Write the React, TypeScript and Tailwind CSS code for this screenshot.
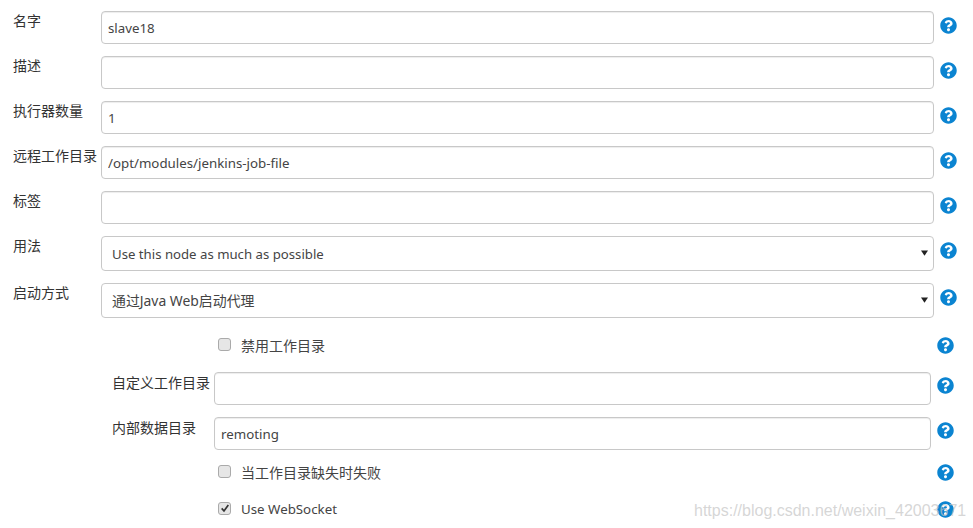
import React from 'react';
import { FaQuestionCircle } from 'react-icons/fa';

const font = "font-['Noto_Sans','Noto_Sans_CJK_SC',sans-serif]";

const HelpIcon: React.FC<{ className?: string }> = ({ className }) => (
  <FaQuestionCircle className={`text-[#0b84d1] w-[17px] h-[17px] shrink-0 ${className ?? ''}`} />
);

const TextRow: React.FC<{ label: string; value?: string }> = ({ label, value }) => (
  <div className="flex items-start h-[33px]">
    <label className="w-[101px] shrink-0 pl-[13px] text-[14px] leading-[20px] whitespace-nowrap">{label}</label>
    <input
      readOnly
      defaultValue={value}
      className="w-[833px] h-[33px] px-[6px] border border-[#c8c8c8] rounded-[4px] text-[13.3px] text-[#444] bg-white shadow-[inset_0_1px_1px_rgba(0,0,0,0.075)] outline-none"
    />
    <HelpIcon className="ml-[6px] mt-[6px]" />
  </div>
);

const SelectRow: React.FC<{ label: string; value: string; size: string }> = ({ label, value, size }) => (
  <div className="flex items-start h-[35px]">
    <label className="w-[101px] shrink-0 pl-[13px] text-[14px] leading-[20px] whitespace-nowrap">{label}</label>
    <div className="relative w-[833px] h-[35px]">
      <select
        defaultValue={value}
        className={`w-full h-full appearance-none pl-[10px] pt-[2px] border border-[#c8c8c8] rounded-[4px] text-[#444] bg-white outline-none ${size}`}
      >
        <option>{value}</option>
      </select>
      <svg viewBox="0 0 8 6" className="absolute right-[6px] top-[14px] w-[7px] h-[6px]">
        <path d="M0 0h8L4 6z" fill="#222" />
      </svg>
    </div>
    <HelpIcon className="ml-[6px] mt-[6px]" />
  </div>
);

const NestedInput: React.FC<{ label: string; value?: string }> = ({ label, value }) => (
  <div className="flex items-start h-[33px] pl-[112px]">
    <label className="w-[102px] shrink-0 text-[14px] leading-[20px] pt-[1px] whitespace-nowrap">{label}</label>
    <input
      readOnly
      defaultValue={value}
      className="w-[717px] h-[33px] px-[6px] border border-[#c8c8c8] rounded-[4px] text-[13.3px] text-[#444] bg-white shadow-[inset_0_1px_1px_rgba(0,0,0,0.075)] outline-none"
    />
    <HelpIcon className="ml-[6px] mt-[5px]" />
  </div>
);

const CheckRow: React.FC<{ label: string; checked?: boolean }> = ({ label, checked }) => (
  <div className="flex items-center h-[18px] pl-[218px]">
    <span className="w-[13px] h-[13px] -mt-[2px] rounded-[3px] border border-[#aaa] bg-[#e6e6e6] flex items-center justify-center shrink-0">
      {checked && (
        <svg viewBox="0 0 12 12" className="w-[10px] h-[10px]">
          <path d="M2 6.5l2.8 3L10 2.5" fill="none" stroke="#333" strokeWidth="2" />
        </svg>
      )}
    </span>
    <span className={`ml-[10px] w-[696px] text-[#444] whitespace-nowrap ${checked ? 'text-[13.3px] pt-[2px]' : 'text-[14px]'}`}>{label}</span>
    <HelpIcon />
  </div>
);

export default function App() {
  return (
    <div className={`relative w-[973px] h-[528px] overflow-hidden bg-white text-[#333] pt-[11px] ${font}`}>
      <div className="flex flex-col gap-[12px]">
        <TextRow label="名字" value="slave18" />
        <TextRow label="描述" />
        <TextRow label="执行器数量" value="1" />
        <TextRow label="远程工作目录" value="/opt/modules/jenkins-job-file" />
        <TextRow label="标签" />
        <SelectRow label="用法" value="Use this node as much as possible" size="text-[13.2px]" />
        <SelectRow label="启动方式" value="通过Java Web启动代理" size="text-[13.9px]" />
      </div>
      <div className="mt-[18px]">
        <CheckRow label="禁用工作目录" />
      </div>
      <div className="mt-[18px] flex flex-col gap-[12px]">
        <NestedInput label="自定义工作目录" />
        <NestedInput label="内部数据目录" value="remoting" />
      </div>
      <div className="mt-[13px]">
        <CheckRow label="当工作目录缺失时失败" />
      </div>
      <div className="mt-[19px]">
        <CheckRow label="Use WebSocket" checked />
      </div>
      <span className="absolute left-[694px] top-[500px] text-[16px] leading-[22px] text-[#c4c4c4]/70 font-['Liberation_Sans',sans-serif] whitespace-nowrap">
        https://blog.csdn.net/weixin_42003671
      </span>
    </div>
  );
}
